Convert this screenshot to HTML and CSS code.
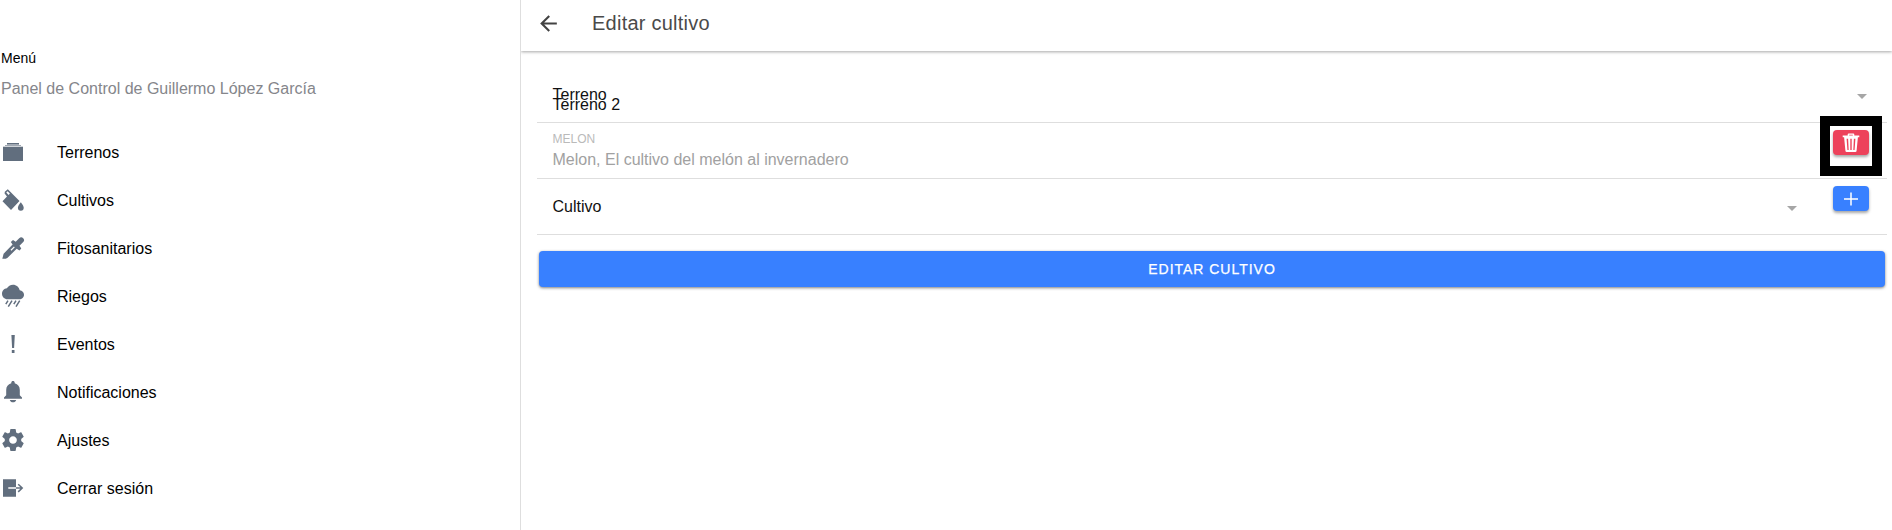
FILE: index.html
```html
<!DOCTYPE html>
<html lang="es">
<head>
<meta charset="utf-8">
<title>Editar cultivo</title>
<link rel="stylesheet" href="styles.css">
</head>
<body>
<div class="app">
  <aside class="sidebar">
    <h2 class="menu-title">Menú</h2>
    <p class="menu-note">Panel de Control de Guillermo López García</p>
    <nav class="menu">
      <a class="menu-item"><svg class="icon" viewBox="0 0 24 24"><path d="M2 7h20v14H2zM6 3h12v1H6z"/><path opacity=".6" d="M6 4h12v1H6zM4 5h16v1H4zM2 6.500h20V7H2z"/></svg><span class="menu-label">Terrenos</span></a>
      <a class="menu-item"><svg class="icon" viewBox="0 0 24 24"><path fill-rule="evenodd" d="M6.800 1.300 18.500 13 10 22 1.500 13.200 6 8.400 3.600 5.600 3.800 3.800zM6.500 3.200 5.300 4.600 7.600 7 8.900 5.600z"/><path d="M19.800 14.200s-2.900 3.300-2.900 5.600a2.900 2.900 0 0 0 5.800 0c0-2.300-2.900-5.600-2.900-5.600z"/></svg><span class="menu-label">Cultivos</span></a>
      <a class="menu-item"><svg class="icon" viewBox="0 0 24 24"><path fill-rule="evenodd" d="M22.200 2.300a2.800 2.800 0 0 0-4 0L14.700 5.800 12 4 9.800 6l1.800 2.500L2.600 17.800 1.300 22.800h3.400l1.600-.8 9.400-9.200 2.800 1.800 1.800-2-1.800-2.900 3.500-3.400a2.800 2.800 0 0 0 .2-4zM12.900 10.400l.9.900-3.400 3.400-.9-.9z"/></svg><span class="menu-label">Fitosanitarios</span></a>
      <a class="menu-item"><svg class="icon" viewBox="0 0 24 24"><path transform="translate(1 -3) scale(.917)" d="M19.350 10.040C18.670 6.590 15.640 4 12 4 9.110 4 6.600 5.640 5.350 8.040 2.340 8.360 0 10.910 0 14c0 3.310 2.690 6 6 6h13c2.760 0 5-2.240 5-5 0-2.640-2.050-4.780-4.650-4.960z"/><path class="line" d="M7 16.600l-2.200 3.600M11 16.600l-3.700 6M15 16.600l-2.200 3.600M18.700 16.600l-3.700 6"/></svg><span class="menu-label">Riegos</span></a>
      <a class="menu-item"><svg class="icon" viewBox="0 0 24 24"><path d="M10.400 3h3.400l-.7 13h-2zM10.800 18h2.700v3h-2.700z"/></svg><span class="menu-label">Eventos</span></a>
      <a class="menu-item"><svg class="icon" viewBox="0 0 24 24"><path d="M12 1c-1 0-1.700.7-1.700 1.500v.8C7 4.100 5.200 6.600 5.200 10v5.200L3 17.600v1.100h18v-1.100l-2.200-2.400V10c0-3.400-1.800-5.900-5.100-6.700v-.8C13.700 1.700 13 1 12 1zM8.800 20c.4 1.400 1.700 2.300 3.200 2.300s2.800-.9 3.200-2.300z"/></svg><span class="menu-label">Notificaciones</span></a>
      <a class="menu-item"><svg class="icon" viewBox="0 0 24 24"><path transform="translate(-1.200 -1.200) scale(1.100)" d="M19.430 12.980c.04-.32.070-.64.070-.98s-.030-.66-.070-.98l2.110-1.650c.19-.15.24-.42.120-.64l-2-3.460c-.12-.22-.39-.3-.61-.22l-2.490 1c-.52-.4-1.080-.73-1.690-.98l-.38-2.650C14.460 2.180 14.250 2 14 2h-4c-.25 0-.46.18-.49.42l-.38 2.650c-.61.25-1.170.59-1.690.98l-2.490-1c-.23-.09-.49 0-.61.22l-2 3.460c-.13.22-.070.49.120.64l2.110 1.650c-.04.32-.070.65-.070.98s.030.66.070.98l-2.110 1.650c-.19.15-.24.42-.12.64l2 3.460c.12.22.39.3.61.22l2.490-1c.52.4 1.080.73 1.690.98l.38 2.650c.030.24.24.42.49.42h4c.25 0 .46-.18.49-.42l.38-2.650c.61-.25 1.170-.59 1.690-.98l2.490 1c.23.09.49 0 .61-.22l2-3.460c.12-.22.070-.49-.12-.64l-2.110-1.650zM12 15.500c-1.930 0-3.500-1.570-3.500-3.500s1.570-3.500 3.500-3.500 3.500 1.570 3.500 3.500-1.570 3.500-3.500 3.500z"/></svg><span class="menu-label">Ajustes</span></a>
      <a class="menu-item"><svg class="icon" viewBox="0 0 24 24"><path fill-rule="evenodd" d="M2 3.300h13v8H7.300v1.500H15v7.900H2z"/><path class="line" d="M15 12.050h6.300M17.200 8.200l4 3.850-4 3.850"/></svg><span class="menu-label">Cerrar sesión</span></a>
    </nav>
  </aside>
  <main class="page">
    <header class="toolbar">
      <svg class="back" viewBox="0 0 24 24"><path d="M20 11H7.830l5.590-5.590L12 4l-8 8 8 8 1.410-1.410L7.830 13H20v-2z"/></svg>
      <h1 class="title">Editar cultivo</h1>
    </header>
    <form class="form">
      <div class="row">
        <div class="select-text"><label class="label">Terreno</label><span class="value">Terreno 2</span></div>
        <span class="caret"></span>
      </div>
      <div class="row">
        <div class="disabled"><label class="caption">MELON</label><span class="text">Melon, El cultivo del melón al invernadero</span></div>
        <button type="button" class="small danger"><svg class="glyph" viewBox="0 0 18 20"><path fill-rule="evenodd" d="M5.700 2.500V1.400Q5.700.5 6.700.5h4.600q1 0 1 .900v1.100h5v1.800h-1.400l-1.300 13.500q-.1 1.200-1.300 1.200H4.700q-1.200 0-1.300-1.200L2.100 4.300H.7V2.500zM7.200 2.500h3.600V1.700H7.200zM4.600 5.700l.8 11.300h1.300L6.100 5.700zM8.300 5.700V17h1.400V5.700zM11.900 5.700 11.300 17h1.300l.8-11.300z"/></svg></button>
        <span class="highlight"></span>
      </div>
      <div class="row">
        <label class="label-plain">Cultivo</label>
        <span class="caret caret-inner"></span>
        <button type="button" class="small primary"><svg class="plus" viewBox="0 0 14 14"><path d="M0 7h14M7 .5v13"/></svg></button>
      </div>
      <button type="button" class="submit">EDITAR CULTIVO</button>
    </form>
  </main>
</div>
</body>
</html>
```
FILE: styles.css
```css
* { box-sizing: border-box; }
body { margin: 0; background: #fff; color: #000; font-family: "Liberation Sans", Arial, sans-serif; font-size: 16px; }
h1, h2, p { margin: 0; font-weight: 400; }
button { border: 0; padding: 0; font: inherit; color: #fff; }
.app { display: flex; width: 100%; height: 530px; overflow: hidden; }

.sidebar { flex: 0 0 521px; border-right: 1px solid #dedede; padding-top: 48px; }
.menu-title { padding-left: 1px; font-size: 14px; line-height: 20px; }
.menu-note { padding-left: 1px; margin-top: 11px; line-height: 20px; color: #85868b; }
.menu { display: flex; flex-direction: column; margin-top: 29px; }
.menu-item { display: flex; align-items: center; gap: 32px; height: 48px; padding-left: 1px; }
.menu-label { padding-top: 2px; }
.icon { width: 24px; height: 24px; fill: #616e7e; }
.line { fill: none; stroke: #616e7e; stroke-width: 1.5; }

.page { flex: 1; min-width: 0; overflow: hidden; }
.toolbar { display: flex; align-items: center; gap: 31px; height: 51px; padding: 0 0 5px 15px; box-shadow: 0 1px 3px rgba(0, 0, 0, .35); }
.back { flex: none; width: 25px; height: 25px; fill: #424242; }
.title { font-size: 20px; line-height: 24px; letter-spacing: .24px; color: #4a4a4a; }

.form { padding: 16px 5px 0 16px; }
.row { position: relative; display: flex; height: 56px; padding: 0 18px 0 15.5px; border-bottom: 1px solid #dedede; }
.select-text { display: flex; flex-direction: column; flex: 1; padding-top: 22px; }
.label, .value { line-height: 10px; }
.label, .value, .label-plain { color: #111; }
.label { display: block; padding-top: 1px; height: 10px; }
.value { padding-top: 1px; }
.label-plain { flex: 1; padding-top: 18px; line-height: 20px; }
.caret { width: 10px; height: 5px; margin: 27px 2px 0 0; background: #a6a6a6; clip-path: polygon(0 0, 100% 0, 50% 100%); }
.caret-inner { margin-right: 36px; }
.disabled { display: flex; flex-direction: column; flex: 1; padding-top: 9px; }
.caption { font-size: 12px; line-height: 14px; color: #bababa; }
.text { margin-top: 4px; line-height: 20px; color: #a1a1a1; }
.small { display: flex; align-items: center; justify-content: center; width: 36px; height: 25px; margin-top: 7px; border-radius: 4px; box-shadow: 0 2px 3px rgba(0, 0, 0, .35); }
.danger { background: #ed425b; }
.primary { background: #3880ff; }
.glyph { width: 18px; height: 20px; fill: #fff; }
.plus { width: 14px; height: 14px; stroke: #fff; stroke-width: 1.5; }
.highlight { position: absolute; top: -7px; right: 5px; width: 62px; height: 60px; border: 10px solid #000; }
.submit { display: block; width: calc(100% - 4px); height: 36px; margin: 16px 2px 0; border-radius: 4px; background: #3880ff; box-shadow: 0 1px 3px rgba(0, 0, 0, .5); font-size: 14px; letter-spacing: .98px; line-height: 36px; -webkit-text-stroke: .25px #fff; }
```
